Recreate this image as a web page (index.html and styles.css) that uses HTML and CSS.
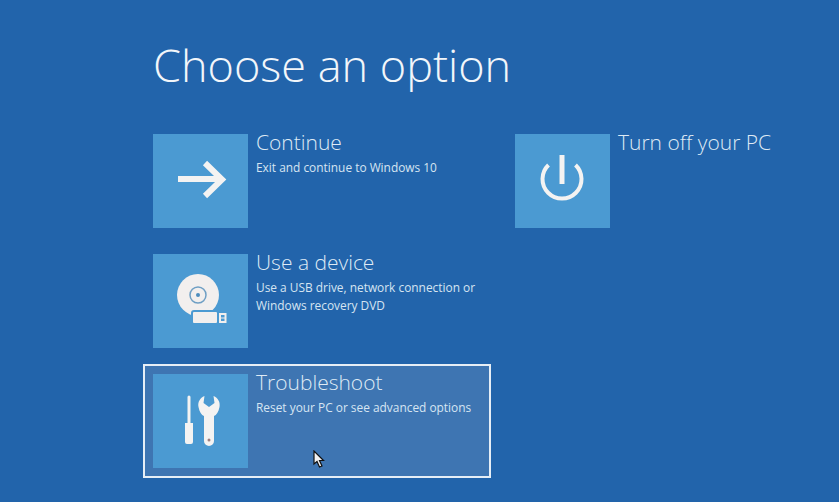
FILE: index.html
```html
<!DOCTYPE html>
<html lang="en">
<head>
    <meta charset="UTF-8">
    <title>Choose an option</title>
    <link rel="stylesheet" href="styles.css">
</head>
<body>
    <h1 class="title">Choose an option</h1>
    <div class="options">
        <div class="column">
            <div class="option">
                <div class="tile">
                    <svg viewBox="0 0 95 95" width="95" height="95">
                        <path d="M25 45H68M52 29L69 45.5L52 62" fill="none" stroke="#f4f3f2" stroke-width="6"/>
                    </svg>
                </div>
                <div class="text">
                    <div class="name">Continue</div>
                    <div class="desc">Exit and continue to Windows 10</div>
                </div>
            </div>
            <div class="option">
                <div class="tile">
                    <svg viewBox="0 0 95 95" width="95" height="95">
                        <circle cx="45" cy="41" r="21" fill="#f2efee"/>
                        <circle cx="45" cy="41" r="8" fill="none" stroke="#6f9fc4" stroke-width="1.5"/>
                        <circle cx="45" cy="41" r="2" fill="#4d8dbd"/>
                        <rect x="39" y="57" width="26" height="13" rx="2" fill="#f2efee" stroke="#4b9ad2" stroke-width="2"/>
                        <rect x="67" y="60" width="5.5" height="8" fill="none" stroke="#f2efee" stroke-width="2"/>
                        <path d="M67 64H72" stroke="#f2efee" stroke-width="1"/>
                    </svg>
                </div>
                <div class="text">
                    <div class="name">Use a device</div>
                    <div class="desc">Use a USB drive, network connection or<br>Windows recovery DVD</div>
                </div>
            </div>
            <div class="option selected">
                <div class="tile">
                    <svg viewBox="0 0 95 95" width="95" height="95">
                        <path d="M34.5 23a1.5 1.5 0 0 1 3 0V49H34.5ZM32 49H40V68a2 2 0 0 1-2 2H34a2 2 0 0 1-2-2Z" fill="#f4f3f2"/>
                        <path d="M51.5 22L50.5 29L56 33L61.5 29L60.5 22C65 24 67.5 28 66.5 33C65.5 38 63.5 41 61 42V67a5 5 0 0 1-10 0V42C48.5 41 46.5 38 45.5 33C44.5 28 47 24 51.5 22Z" fill="#f4f3f2"/>
                        <circle cx="56" cy="66" r="1.5" fill="#a07f80"/>
                    </svg>
                </div>
                <div class="text">
                    <div class="name">Troubleshoot</div>
                    <div class="desc">Reset your PC or see advanced options</div>
                </div>
                <svg class="cursor" viewBox="0 0 12 18" width="12" height="18">
                    <path d="M1 1V14L4 11.5L6.5 17L9 16L6.5 10.5H10.5Z" fill="#f2f2f2" stroke="#111" stroke-width="1.2"/>
                </svg>
            </div>
        </div>
        <div class="column">
            <div class="option">
                <div class="tile">
                    <svg viewBox="0 0 95 95" width="95" height="95">
                        <path d="M33.5 31A19.5 19.5 0 1 0 60.5 31" fill="none" stroke="#f4f3f2" stroke-width="4"/>
                        <path d="M47 21V50" fill="none" stroke="#f4f3f2" stroke-width="5"/>
                    </svg>
                </div>
                <div class="text">
                    <div class="name">Turn off your PC</div>
                </div>
            </div>
        </div>
    </div>
</body>
</html>
```
FILE: styles.css
```css
html, body {
    height: 100%;
}
body {
    margin: 0;
    padding: 34px 0 0 143px;
    box-sizing: border-box;
    background-color: #2264ab;
    color: #e4eef7;
    font-family: "Open Sans", sans-serif;
    overflow: hidden;
}
.title {
    margin: 0 0 28px 10px;
    font-size: 45px;
    font-weight: 300;
    line-height: 62px;
    color: #f2f6fa;
}
.options {
    display: flex;
    gap: 14px;
}
.column {
    display: flex;
    flex-direction: column;
    flex: none;
    gap: 6px;
    width: 348px;
}
.option {
    position: relative;
    display: flex;
    gap: 8px;
    height: 114px;
    padding: 10px;
    box-sizing: border-box;
    border: 2px solid transparent;
}
.tile {
    width: 95px;
    height: 94px;
    margin: -2px 0 0 -2px;
    background-color: #4b9ad2;
    flex-shrink: 0;
}
.tile svg {
    display: block;
}
.text {
    margin-top: -4px;
}
.name {
    font-size: 21px;
    font-weight: 300;
    line-height: 20px;
    margin-bottom: 6px;
    color: #dfeaf5;
}
.desc {
    font-size: 11.9px;
    line-height: 18px;
    white-space: nowrap;
    color: #d6e5f2;
}
.selected {
    background-color: #3e75b2;
    border-color: #e6eef6;
}
.cursor {
    position: absolute;
    left: 168px;
    top: 84px;
}
```
